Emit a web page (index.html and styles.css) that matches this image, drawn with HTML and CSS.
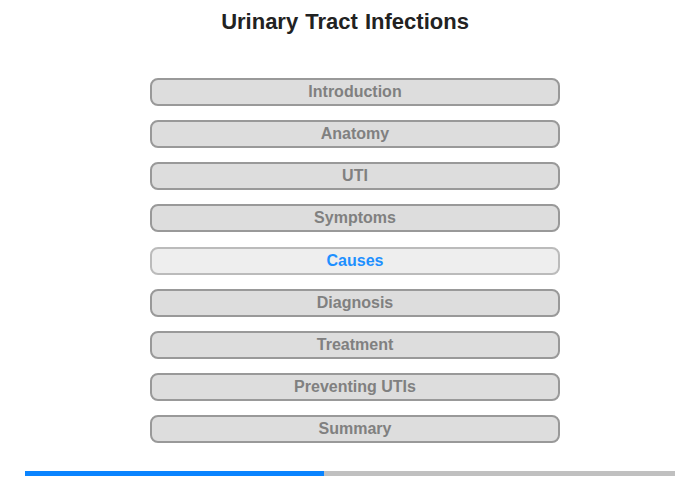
FILE: index.html
```html
<!DOCTYPE html>
<html lang="en">
<head>
    <meta charset="UTF-8">
    <title>Urinary Tract Infections</title>
    <link rel="stylesheet" href="styles.css">
</head>
<body>
    <h1>Urinary Tract Infections</h1>

    <div class="menu">
        <button class="item">Introduction</button>
        <button class="item">Anatomy</button>
        <button class="item">UTI</button>
        <button class="item">Symptoms</button>
        <button class="item active">Causes</button>
        <button class="item">Diagnosis</button>
        <button class="item">Treatment</button>
        <button class="item">Preventing UTIs</button>
        <button class="item">Summary</button>
    </div>

    <div class="progress">
        <div class="progress-fill" style="width: 46%"></div>
    </div>
</body>
</html>
```

FILE: styles.css
```css
body {
    margin: 0;
    font-family: "Liberation Sans", Arial, sans-serif;
    background: #fff;
}
h1 {
    margin: 0;
    padding-top: 9px;
    padding-right: 10px;
    text-align: center;
    font-size: 22px;
    line-height: 26px;
    word-spacing: 1px;
    color: #222;
}
.menu {
    display: flex;
    flex-direction: column;
    gap: 14.125px;
    width: 410px;
    margin: 43px 0 0 150px;
}
.item {
    height: 28px;
    padding: 0;
    border: 2px solid #999;
    border-radius: 8px;
    background: #ddd;
    color: #808080;
    font-family: "Liberation Sans", Arial, sans-serif;
    font-size: 16px;
    font-weight: bold;
    cursor: pointer;
}
.item.active {
    background: #eee;
    border-color: #bbb;
    color: #1e90ff;
}
.progress {
    height: 5px;
    margin: 28px 25px 0;
    background: #c0c0c0;
}
.progress-fill {
    height: 100%;
    background: #0a84ff;
}
```
